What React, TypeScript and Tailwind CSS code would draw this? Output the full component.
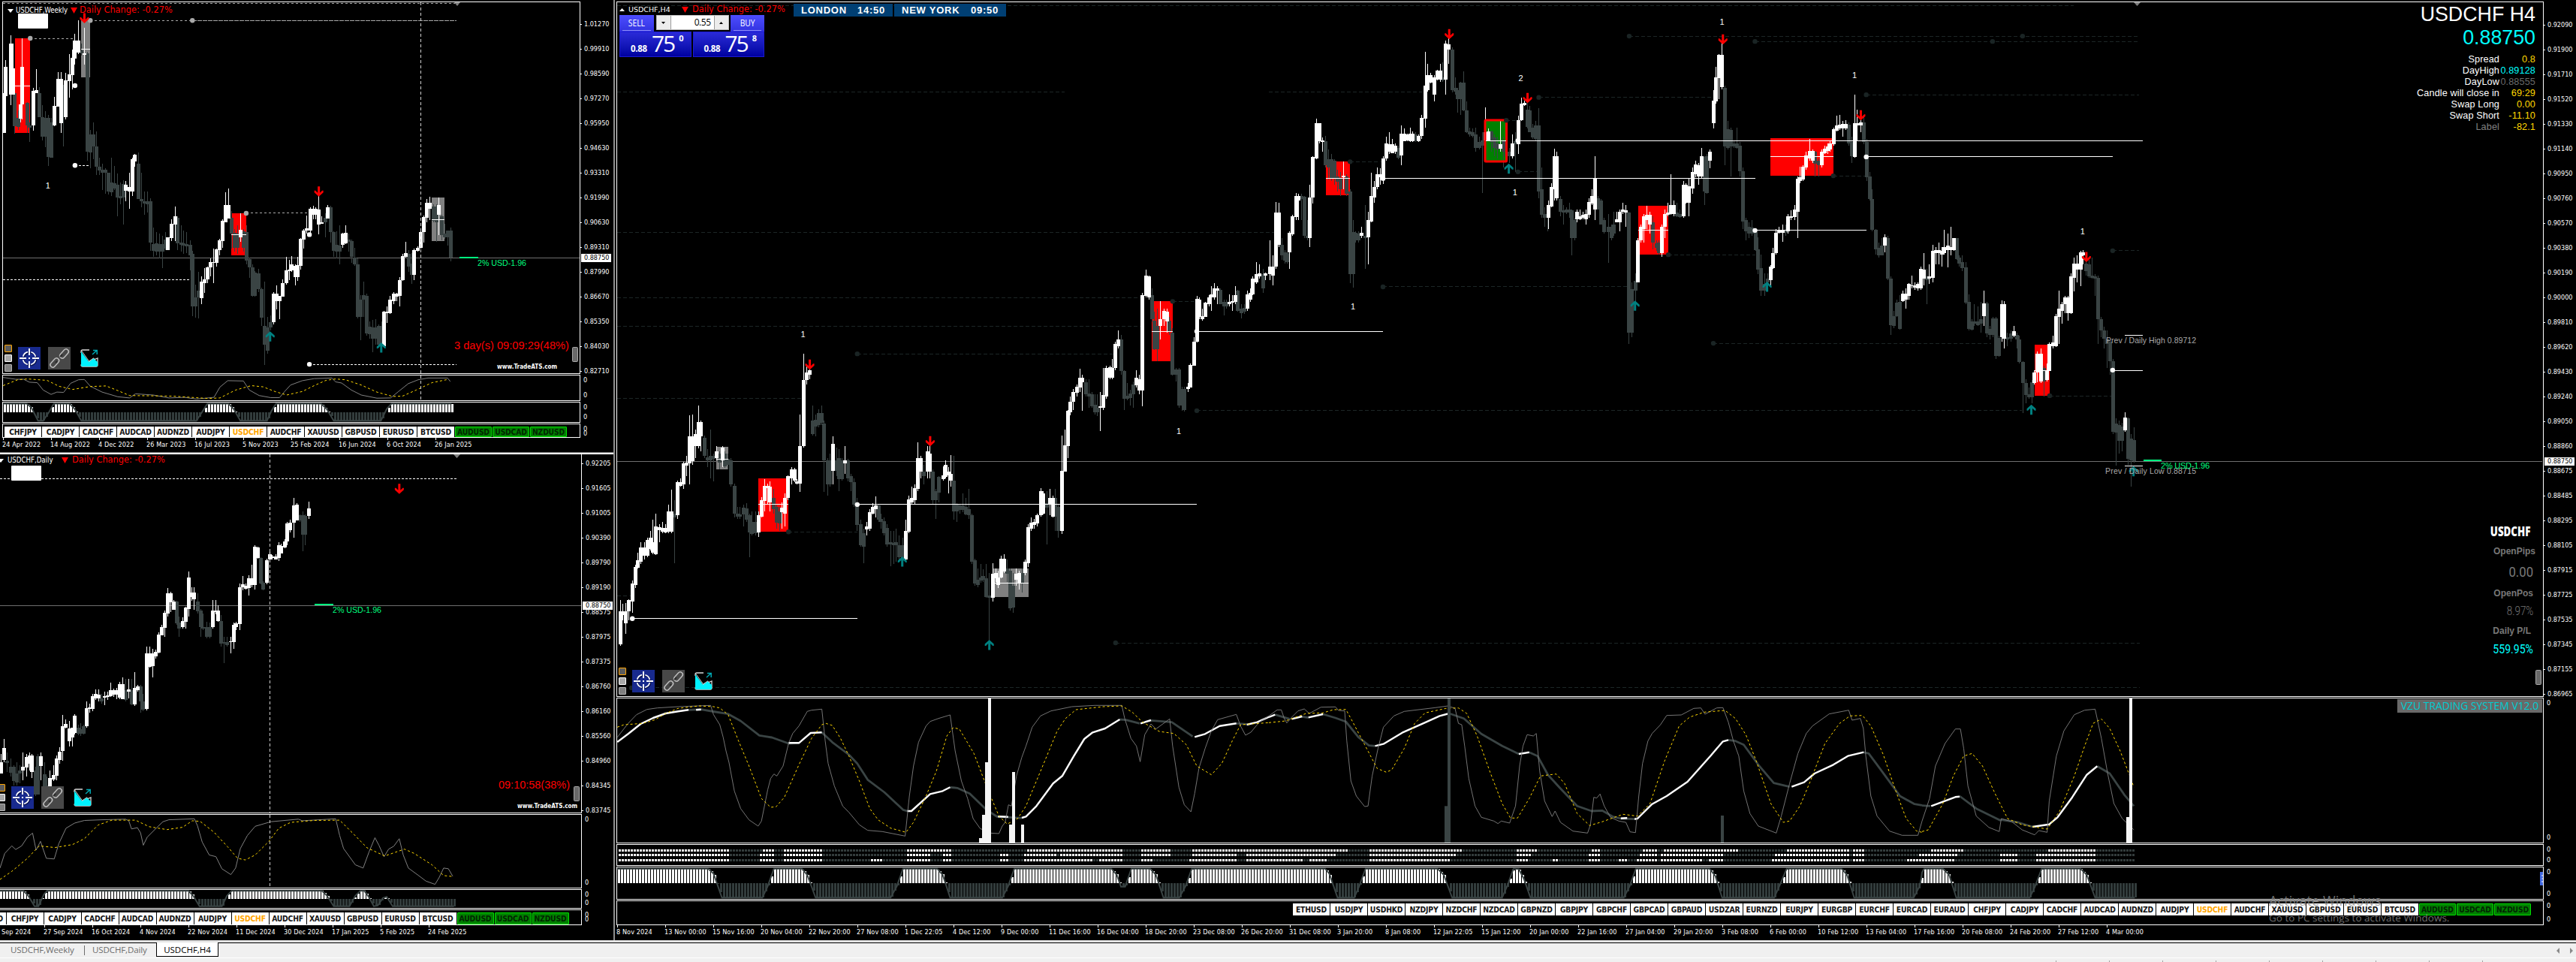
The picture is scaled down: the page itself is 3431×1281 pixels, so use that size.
import React from "react";

/* ---------- geometry helpers ---------- */

type Frame = { ox: number; oy: number; sx: number; sy: number };

const WEEKLY: Frame = { ox: 0, oy: 0, sx: 1.9122, sy: 2.5705 };
const DAILY: Frame = { ox: 0, oy: 600, sx: 1.9122, sy: 2.3025 };
const H4A: Frame = { ox: 820, oy: 0, sx: 1.8023, sy: 1.7043 };
const H4B: Frame = { ox: 1690, oy: 0, sx: 1.8023, sy: 1.7043 };
const H4C: Frame = { ox: 2560, oy: 0, sx: 1.8002, sy: 1.7043 };
const OSCA: Frame = { ox: 820, oy: 860, sx: 1.8023, sy: 3 };
const OSCB: Frame = { ox: 1690, oy: 860, sx: 1.8023, sy: 3 };
const OSCC: Frame = { ox: 2560, oy: 860, sx: 1.8002, sy: 3 };

const fx = (f: Frame, x: number) => f.ox + x / f.sx;
const fy = (f: Frame, y: number) => f.oy + y / f.sy;
const rows = (s: string) => s.trim().split(";").map((r) => r.trim()).filter(Boolean).map((r) => r.split(/[\s,]+/).map(Number));
const pts = (f: Frame, s: string): [number, number][] =>
  s.trim().split(/\s+/).map((p) => {
    const [x, y] = p.split(",").map(Number);
    return [fx(f, x), fy(f, y)];
  });
const str = (p: [number, number][]) => p.map(([x, y]) => x.toFixed(1) + "," + y.toFixed(1)).join(" ");

const SLATE = "#3a4444";

/* ---------- drawing primitives ---------- */

/* Each row: centre, body top, body bottom, wick top, wick bottom */
function Candles({ f, data, color }: { f: Frame; data: string; color: string }) {
  return (
    <g fill={color} shapeRendering="crispEdges">
      {rows(data).map(([x, t, b, wt, wb], i) => {
        const cx = Math.round(fx(f, x) - 0.5);
        const y = Math.round(fy(f, t));
        const h = Math.max(1, Math.round(fy(f, b)) - y);
        const w0 = Math.round(fy(f, wt));
        const w1 = Math.round(fy(f, wb));
        return (
          <React.Fragment key={i}>
            <rect x={cx - 2} y={y} width={5} height={h} />
            <rect x={cx} y={w0} width={1} height={Math.max(1, w1 - w0)} />
          </React.Fragment>
        );
      })}
    </g>
  );
}

function Boxes({ f, data, color }: { f: Frame; data: string; color: string }) {
  return (
    <g fill={color} shapeRendering="crispEdges">
      {rows(data).map(([x0, y0, x1, y1], i) => (
        <rect key={i} x={fx(f, x0)} y={fy(f, y0)} width={fx(f, x1) - fx(f, x0)} height={fy(f, y1) - fy(f, y0)} />
      ))}
    </g>
  );
}

/* Each row: x0, x1, y */
function HLines({ f, data, color, dash, w = 1 }: { f: Frame; data: string; color: string; dash?: string; w?: number }) {
  return (
    <g stroke={color} strokeWidth={w} strokeDasharray={dash} shapeRendering="crispEdges">
      {rows(data).map(([x0, x1, y], i) => {
        const yy = Math.floor(fy(f, y)) + 0.5;
        return <line key={i} x1={fx(f, x0)} x2={fx(f, x1)} y1={yy} y2={yy} />;
      })}
    </g>
  );
}

function Dots({ f, data, color }: { f: Frame; data: string; color: string }) {
  return (
    <g fill={color}>
      {rows(data).map(([x, y], i) => (
        <circle key={i} cx={fx(f, x)} cy={fy(f, y)} r={3.2} />
      ))}
    </g>
  );
}

function Arrows({ f, data, up }: { f: Frame; data: string; up?: boolean }) {
  return (
    <g fill={up ? "#008080" : "#ff0000"}>
      {rows(data).map(([x, y], i) => (
        <path
          key={i}
          transform={`translate(${fx(f, x)} ${fy(f, y)}) scale(1 ${up ? -1 : 1})`}
          d="M-1.5 -6.5H1.5V2L4.5 -1L6 -1V1.5L0 7L-6 1.5V-1L-4.5 -1L-1.5 2Z"
        />
      ))}
    </g>
  );
}

function Marks({ f, data }: { f: Frame; data: string }) {
  return (
    <g fill="#fff" fontFamily="Liberation Sans" fontSize="11" textAnchor="middle">
      {rows(data).map(([x, y, n], i) => (
        <text key={i} x={fx(f, x)} y={fy(f, y) + 4}>{n}</text>
      ))}
    </g>
  );
}

function Line({ f, d, color, w = 1, dash }: { f: Frame; d: string; color: string; w?: number; dash?: string }) {
  return <polyline points={str(pts(f, d))} fill="none" stroke={color} strokeWidth={w} strokeDasharray={dash} strokeLinejoin="round" />;
}

/* Two-sided histogram under an envelope curve */
function Histogram({ points, zero }: { points: [number, number][]; zero: number }) {
  const bars: React.ReactNode[] = [];
  const start = Math.ceil(points[0][0]);
  const end = points[points.length - 1][0];
  let k = 0;
  for (let x = start; x < end; x += 4) {
    while (k < points.length - 2 && points[k + 1][0] < x) k++;
    const [x0, y0] = points[k];
    const [x1, y1] = points[k + 1];
    const y = Math.round(y0 + ((y1 - y0) * (x - x0)) / (x1 - x0 || 1));
    if (y < zero) bars.push(<rect key={x} x={x} y={y} width={3} height={zero - y} fill="#fff" />);
    else if (y > zero) bars.push(<rect key={x} x={x} y={zero} width={3} height={y - zero} fill="#323c3c" />);
  }
  return (
    <g>
      <g shapeRendering="crispEdges">{bars}</g>
      <polyline points={str(points)} fill="none" stroke={SLATE} strokeWidth={2} />
    </g>
  );
}

function Plot({ x, y, w, h, children }: { x: number; y: number; w: number; h: number; children?: React.ReactNode }) {
  return (
    <svg className="block" width={w} height={h} viewBox={`${x} ${y} ${w} ${h}`}>
      {children}
    </svg>
  );
}

/* ---------- price series ---------- */

const weeklyUp = `10 320 455 315 455;15 230 328 205 350;27 148 325 120 360;34 235 325 148 325;57 230 358 132 408;53 358 405 235 420;85 310 430 300 448;93 308 320 236 320;138 362 430 332 432;148 270 365 247 365;155 270 422 247 455;168 275 402 250 408;177 255 277 185 335;184 198 258 170 305;191 140 200 115 220;199 140 180 70 185;215 183 188 95 220;321 632 652 620 690;329 640 655 590 715;337 545 655 540 670;344 530 552 527 570;428 812 855 812 855;437 765 815 750 825;446 740 768 708 825;513 965 1020 945 1040;521 955 968 917 1003;528 915 957 912 968;537 898 915 883 945;544 897 900 850 970;551 853 900 850 912;559 823 855 817 875;567 757 825 750 848;575 702 760 658 762;582 703 748 645 748;612 787 812 730 828;697 1006 1103 1000 1110;705 1006 1030 977 1058;712 1012 1030 1012 1092;720 968 1015 955 1015;729 925 970 878 975;737 922 928 890 960;743 905 925 877 930;752 910 948 905 977;759 908 948 878 962;766 818 910 815 922;774 790 820 785 850;782 782 790 738 800;790 715 790 710 805;798 715 735 705 750;805 715 735 710 750;812 718 768 672 802;820 760 765 740 765;834 710 748 702 748;872 800 838 797 848;880 798 833 770 835;978 1068 1185 1065 1190;986 1068 1073 1048 1105;994 1025 1073 1013 1075;1003 1005 1030 1000 1040;1010 1005 1015 1003 1030;1018 958 1012 948 1050;1026 877 960 870 962;1034 865 880 828 882;1055 857 940 850 958;1064 847 858 842 860;1071 793 848 790 850;1080 742 795 738 830;1088 695 745 682 760;1095 695 715 673 752;1118 703 735 677 805`;
const weeklyDown = `38 320 432 320 458;46 403 435 378 445;69 353 430 350 455;76 428 438 420 487;100 318 400 298 400;108 400 467 360 480;116 403 467 380 505;124 403 538 393 568;131 420 540 403 540;162 375 402 290 500;207 172 183 150 190;222 182 520 178 550;230 460 522 445 575;238 460 500 418 545;245 500 570 450 600;253 570 583 540 600;261 580 590 560 650;268 580 592 575 662;276 590 655 590 665;284 625 657 540 672;291 628 645 568 650;299 632 675 595 740;307 672 678 625 700;314 630 675 618 768;352 560 680 522 680;360 680 688 590 710;368 690 696 655 735;376 690 700 655 728;383 690 830 678 858;391 835 858 780 880;399 833 860 795 875;407 835 860 800 885;414 835 862 808 918;422 820 850 795 855;453 745 832 740 855;461 830 838 772 860;468 832 840 790 870;475 835 842 795 865;484 838 875 822 925;490 870 1048 858 1082;499 1018 1048 975 1088;506 995 1018 930 1090;590 745 800 722 850;598 798 848 785 862;606 800 848 770 870;620 792 848 785 860;628 795 893 772 905;635 887 915 882 950;643 915 1012 905 1015;650 933 1012 928 1015;658 935 990 920 1000;666 990 1087 985 1115;674 1115 1180 963 1248;681 1120 1200 1085 1210;689 1103 1120 1080 1130;828 745 760 730 812;842 710 795 705 830;850 795 858 792 878;857 837 862 792 885;865 840 862 770 905;888 820 828 800 860;896 825 880 820 900;903 882 905 848 910;911 905 1085 885 1090;918 1025 1085 1010 1165;926 1010 1025 965 1085;934 1012 1142 1005 1148;941 1118 1145 1100 1160;949 1120 1160 1095 1205;957 1120 1160 1092 1180;965 1115 1180 1110 1190;972 1115 1180 1100 1190;1041 870 912 855 930;1049 903 940 865 972;1104 707 757 700 760;1111 707 760 700 828;1126 740 805 735 822;1133 800 812 765 818;1141 790 812 788 840;1148 788 882 780 895`;

const dailyUp = `2 955 990 930 990;11 912 948 885 955;59 970 980 925 1010;67 940 972 930 1000;75 935 960 925 980;82 935 985 930 1005;105 937 968 925 1010;128 1005 1030 980 1032;136 995 1008 965 1012;145 945 997 935 1010;152 923 948 910 960;160 845 922 810 950;168 837 850 825 852;176 852 890 830 908;184 850 880 850 908;191 812 865 808 870;220 790 845 768 850;228 788 792 775 803;236 752 792 745 800;244 745 760 732 765;251 748 760 732 768;266 752 758 740 780;275 750 755 738 765;282 735 752 712 755;290 735 748 730 755;298 735 748 728 762;305 715 758 710 762;313 715 762 695 762;327 732 738 700 760;343 728 778 680 782;350 722 735 718 740;373 622 792 600 797;381 622 662 600 665;389 622 660 608 695;397 618 632 610 638;405 565 620 558 622;413 540 567 535 567;420 497 543 490 572;428 437 500 422 508;435 437 465 432 495;442 462 488 458 488;465 522 542 512 545;473 482 525 478 545;480 390 485 371 508;488 435 450 420 460;495 435 455 420 488;542 490 542 458 545;549 490 495 458 502;556 490 522 475 525;588 585 587 572 622;595 535 587 528 607;602 530 540 525 550;610 418 532 408 550;618 410 418 385 428;626 415 423 408 425;633 392 422 383 445;641 392 412 350 418;650 295 412 290 425;656 298 330 295 332;679 337 405 332 410;687 317 335 305 340;694 325 330 320 335;702 325 335 318 335;710 290 330 282 338;717 292 315 285 315;725 278 298 272 300;732 223 278 218 290;740 220 245 212 250;749 167 222 145 268;756 165 213 162 215;786 177 200 157 210`;
const dailyDown = `19 950 958 925 985;28 970 988 945 1000;36 970 1012 965 1028;43 990 1018 955 1028;50 980 990 965 1020;90 980 1055 970 1058;97 937 1055 930 1055;113 993 1030 955 1035;120 1028 1035 1000 1040;199 850 868 840 872;206 855 868 835 875;213 845 868 840 870;259 760 768 745 775;320 735 765 700 770;335 735 778 700 780;358 722 768 718 803;365 768 795 745 800;450 462 530 460 535;457 528 545 510 570;503 462 492 438 500;511 490 540 485 572;518 540 545 500 550;526 542 570 525 575;534 540 572 528 575;564 522 592 505 600;571 588 592 572 652;579 588 597 572 600;664 330 407 328 410;670 405 427 400 428;763 198 215 195 218;771 198 258 187 308;778 200 258 195 290`;

const h4aUp = `11 1388 1462 1362 1466;18 1387 1395 1370 1408;25 1388 1415 1368 1438;32 1362 1388 1360 1408;40 1325 1365 1318 1390;47 1287 1327 1282 1335;54 1272 1288 1255 1290;61 1242 1275 1230 1280;69 1242 1262 1230 1270;76 1225 1262 1220 1265;83 1220 1245 1205 1250;90 1230 1255 1180 1258;97 1195 1258 1165 1260;105 1197 1203 1190 1230;112 1198 1207 1185 1210;120 1198 1208 1190 1210;127 1160 1207 1145 1210;134 1160 1207 1112 1210;148 1095 1170 1090 1178;155 1095 1103 1085 1105;163 1052 1100 1048 1110;170 1050 1056 1035 1080;178 990 1052 942 1100;184 990 1047 940 1055;192 985 1012 975 1040;199 958 1013 920 1018;205 958 990 955 1025;242 1025 1040 1012 1045;256 1015 1045 1012 1060;343 1170 1208 1160 1218;350 1135 1172 1128 1175;357 1103 1137 1087 1160;365 1103 1107 1098 1145;371 1105 1140 1092 1160;400 1152 1162 1140 1200;407 1130 1165 1120 1195;414 1080 1130 1078 1135;422 1065 1085 1060 1100;429 1065 1090 1062 1095;436 1092 1098 1088 1100;443 1012 1098 940 1117;451 863 1012 803 1015;458 845 863 832 872;465 840 850 830 860;522 1008 1068 990 1100;551 1045 1052 1012 1075;603 1195 1202 1185 1215;610 1163 1200 1155 1205;617 1150 1165 1142 1168;624 1147 1155 1127 1175;696 1205 1270 1180 1272;704 1133 1207 1125 1210;711 1130 1140 1105 1145;718 1108 1135 1100 1145;726 1040 1110 1004 1115;733 1040 1070 1035 1085;748 1025 1070 1012 1085;755 1030 1070 1010 1085;786 1078 1088 1058 1090;793 1055 1083 1045 1085;800 1070 1078 1060 1120;805 1075 1090 1032 1105;905 1302 1357 1278 1365;912 1300 1312 1290 1320;918 1310 1328 1295 1335;926 1268 1310 1262 1312;933 1268 1297 1258 1300;962 1302 1315 1290 1330;969 1300 1325 1295 1338;983 1275 1300 1270 1305;991 1197 1278 1190 1287;998 1187 1200 1175 1205;1005 1185 1192 1178 1200;1012 1170 1188 1165 1195;1021 1115 1170 1108 1172;1027 1120 1165 1115 1168;1042 1130 1145 1110 1170;1049 1130 1172 1125 1175;1071 1068 1205 988 1212;1078 1010 1070 975 1070;1085 933 1012 930 1040;1092 912 935 900 942;1099 890 912 882 930;1107 877 892 872 900;1115 857 880 837 890;1121 857 868 850 932;1164 922 925 890 978;1171 897 925 835 930;1178 835 900 830 905;1186 833 857 830 860;1192 835 857 815 860;1200 780 835 775 840;1207 770 785 750 790;1249 858 875 840 880;1257 860 887 850 895;1265 670 887 665 922;1273 625 672 612 675;1280 628 675 625 680;1308 725 740 683 770;1316 705 725 700 740;1323 707 730 700 755;1374 878 882 870 890;1380 828 880 825 880;1388 775 830 765 830;1395 678 775 672 778;1402 680 720 675 725;1409 718 725 700 728;1416 687 720 685 720;1424 675 690 670 695;1431 668 675 650 705;1438 655 675 643 680;1445 655 660 650 690;1473 685 690 668 695;1480 683 687 670 705;1487 670 685 650 690;1516 668 700 660 705;1523 665 680 655 685;1530 633 668 628 670;1538 622 640 595 645;1545 620 628 600 632;1560 620 625 618 635`;
const h4aDown = `141 1165 1175 1135 1278;213 993 1035 988 1040;220 1038 1045 1020 1060;228 1035 1045 975 1085;235 1035 1042 1030 1093;249 1030 1050 1025 1065;263 1030 1058 1025 1062;270 1042 1055 1030 1065;277 1045 1100 1040 1105;285 1102 1165 1098 1175;292 1165 1172 1150 1178;299 1167 1172 1150 1178;307 1152 1168 1145 1195;314 1153 1180 1142 1185;321 1170 1208 1165 1265;328 1185 1212 1160 1215;336 1185 1210 1160 1215;379 1130 1155 1110 1165;386 1150 1187 1145 1200;393 1160 1188 1150 1205;473 955 985 920 988;480 953 968 940 990;487 937 965 928 970;494 937 960 920 965;501 962 1045 955 1117;509 1045 1100 1040 1125;515 1045 1100 1030 1105;530 1045 1068 1015 1080;537 1040 1087 1020 1115;544 1045 1088 1040 1090;558 1045 1085 1042 1092;565 1080 1095 1075 1115;572 1095 1145 1085 1150;580 1145 1192 1130 1205;588 1190 1238 1180 1240;596 1210 1240 1200 1278;631 1147 1180 1145 1185;638 1178 1185 1165 1200;645 1182 1210 1175 1215;652 1198 1235 1190 1240;660 1230 1235 1205 1285;667 1232 1237 1205 1280;674 1230 1238 1200 1275;681 1237 1265 1215 1272;689 1237 1270 1220 1275;740 1070 1080 1055 1100;762 1070 1135 1065 1145;769 1115 1135 1110 1178;776 1082 1118 1080 1140;812 1090 1160 1035 1180;819 1145 1160 1142 1185;826 1147 1158 1145 1165;833 1147 1158 1120 1162;841 1150 1168 1130 1170;848 1155 1170 1110 1178;855 1170 1275 1165 1280;862 1272 1325 1268 1330;869 1315 1328 1290 1332;876 1310 1318 1280 1322;883 1308 1315 1292 1320;890 1312 1355 1280 1356;897 1352 1356 1300 1455;940 1290 1302 1270 1320;947 1295 1380 1290 1385;954 1330 1378 1300 1390;976 1300 1325 1290 1345;1035 1142 1152 1115 1235;1056 1130 1172 1110 1205;1063 1150 1205 1145 1220;1129 868 895 860 900;1136 893 900 860 925;1143 895 922 890 925;1150 918 935 895 940;1157 925 935 895 945;1214 770 842 760 850;1221 842 905 840 930;1229 898 905 870 908;1236 893 903 885 920;1243 872 895 865 925;1287 670 725 655 730;1294 728 792 707 795;1301 740 792 700 820;1330 728 752 720 760;1337 755 850 745 852;1345 838 850 835 865;1352 838 920 835 925;1359 882 920 878 932;1366 882 930 878 934;1452 658 690 655 690;1460 685 695 680 715;1467 685 695 680 700;1494 660 705 658 708;1502 700 710 690 722;1509 698 708 690 712;1554 622 655 610 665`;

const h4bUp = `3 605 622 545 635;10 605 625 580 648;17 482 605 458 610;24 482 555 460 560;50 528 572 525 610;57 490 532 488 535;65 445 492 438 500;72 445 455 440 500;99 448 540 420 560;106 357 448 355 462;114 280 360 270 362;121 280 320 280 325;129 318 322 312 345;180 398 402 367 430;223 528 535 515 540;238 500 538 480 600;246 445 502 392 505;253 425 448 410 460;260 395 425 380 430;267 395 402 382 420;275 360 402 355 418;282 325 360 310 365;289 328 345 300 350;296 328 347 315 348;303 330 345 325 350;318 303 352 285 375;325 303 320 292 320;332 305 318 303 320;339 303 320 290 322;346 303 320 298 322;360 308 320 305 322;367 268 308 260 315;375 195 270 118 290;382 170 205 145 208;389 170 187 165 190;397 175 215 170 230;404 160 180 158 182;411 160 180 145 185;425 98 180 92 215;432 100 112 85 145;520 300 318 243 320;527 298 318 292 320;556 328 338 275 345;585 325 355 305 360;599 272 328 262 350;606 235 272 222 275;613 233 238 228 240;671 465 495 455 520;678 425 468 415 470;686 355 430 337 455;692 355 450 345 455;740 480 498 475 505;747 490 497 475 500;754 488 495 480 497;761 485 497 475 510;769 458 488 450 495;776 445 462 430 465;783 405 475 355 500;835 497 505 480 505;842 480 505 475 525;849 475 480 460 485;857 478 483 465 515;886 545 640 540 640;893 515 545 510 550;901 490 520 485 550;908 487 500 467 520;915 487 510 480 530;944 515 575 510 583;951 485 515 475 540;958 482 488 460 490;966 465 485 395 488;973 465 485 455 490;995 420 490 410 495;1002 420 460 415 462;1009 422 460 405 490;1017 390 428 380 440;1024 373 395 365 402;1031 375 400 370 420;1039 355 400 335 405;1059 345 365 340 382;1067 228 280 205 292;1074 175 230 152 235;1081 125 178 122 225;1088 125 198 95 202;1204 605 635 602 650;1211 575 608 562 610;1218 528 575 520 578;1225 522 528 515 530;1233 522 528 510 548;1247 490 525 485 530;1254 490 495 478 500;1262 475 492 465 500;1269 405 480 400 540;1276 402 410 378 415;1283 378 408 375 410;1290 353 380 345 385;1298 342 360 315 365;1305 342 365 340 370;1327 345 375 340 380;1334 338 348 330 350;1341 332 342 325 350;1348 325 340 320 345;1356 293 328 290 330;1363 285 297 262 298;1370 283 292 260 295;1377 282 292 275 310;1385 282 292 272 295;1406 280 357 215 358;1413 280 285 248 318;1421 278 285 270 300;1478 538 558 532 572;1522 667 683 660 685;1530 667 680 655 700;1537 645 672 642 680;1544 648 650 625 655;1551 648 652 640 658;1558 645 655 640 660;1565 610 655 605 658`;
const h4bDown = `31 555 580 540 590;39 572 592 568 598;45 575 595 572 598;79 445 452 440 500;86 447 535 445 540;93 535 540 500 545;136 320 375 308 380;144 362 380 340 408;151 362 405 350 410;158 365 405 362 420;165 400 412 385 435;172 405 430 390 445;187 400 440 395 445;195 435 622 430 643;202 527 622 500 653;209 528 545 525 550;216 530 545 525 550;231 535 540 465 610;310 335 358 330 362;353 305 318 300 322;418 175 182 142 185;440 112 205 108 210;447 200 208 175 215;454 205 225 200 255;461 187 225 185 260;468 187 250 162 252;475 250 300 230 302;482 298 305 290 310;490 300 308 292 312;497 305 335 290 345;505 322 335 310 340;513 318 330 300 438;535 298 322 296 345;542 312 335 305 355;549 325 340 310 360;563 318 345 310 380;570 345 355 330 365;577 345 355 335 370;592 320 328 300 390;620 248 288 230 292;627 250 300 240 300;634 290 312 282 315;641 285 315 275 318;648 285 435 245 450;656 430 487 380 495;663 485 495 470 515;670 490 495 465 525;700 452 480 445 490;707 478 482 465 510;714 475 482 470 485;721 475 482 460 495;728 478 540 475 580;735 500 540 495 545;791 450 475 445 475;798 455 510 452 510;805 500 527 495 530;815 515 527 485 597;822 515 540 510 545;829 510 530 480 535;865 482 755 480 780;872 657 755 640 765;880 637 660 620 700;922 505 550 490 565;930 552 562 545 570;937 550 575 545 578;980 482 490 460 492;987 485 492 475 495;1046 357 435 355 465;1052 355 438 350 440;1095 200 332 195 375;1103 293 335 275 340;1110 295 332 290 400;1117 325 332 318 335;1124 325 335 290 337;1131 330 388 322 400;1139 388 502 380 520;1146 500 525 495 545;1153 515 530 505 540;1160 517 530 500 535;1168 527 567 522 570;1175 565 612 538 622;1182 608 660 577 672;1190 645 660 620 672;1197 632 640 620 655;1240 522 528 510 535;1312 345 372 342 400;1320 365 375 360 400;1392 283 325 278 330;1399 322 355 310 370;1428 278 322 265 328;1435 322 402 315 410;1442 400 452 390 455;1449 452 522 430 525;1457 522 565 520 578;1464 562 580 550 585;1471 558 580 540 580;1486 540 632 535 635;1493 632 738 628 760;1500 718 740 705 745;1507 687 718 680 720;1514 685 747 670 748`;

const h4cUp = `4 612 632 575 648;18 628 632 600 645;26 570 630 555 640;33 568 575 560 600;40 568 575 550 600;47 570 577 560 605;54 560 575 522 578;62 558 568 530 607;69 560 568 515 580;76 540 568 540 570;148 688 718 660 740;191 690 765 682 775;198 690 768 683 790;220 752 762 740 765;270 845 870 840 872;277 802 845 798 868;285 802 865 790 870;299 840 862 825 865;306 780 842 778 842;314 778 785 762 790;321 717 785 712 788;328 700 720 660 780;336 690 705 685 735;343 675 690 672 710;350 675 710 672 728;357 628 710 620 712;365 598 630 585 662;372 598 612 580 640;380 573 612 570 650;387 573 580 568 600;487 948 977 935 980`;
const h4cDown = `11 628 635 610 690;83 540 588 540 590;90 585 598 580 605;97 595 608 580 615;105 607 687 595 690;112 685 747 668 750;119 730 748 725 750;126 730 735 690 740;134 730 738 695 740;141 725 735 685 755;155 688 757 685 765;163 747 760 740 770;170 722 760 720 765;177 722 808 720 815;184 767 808 762 810;205 765 770 755 785;213 757 768 750 775;227 760 770 755 790;234 770 822 762 825;242 822 870 820 937;249 870 897 860 915;256 895 902 880 905;263 868 902 862 915;292 835 865 830 900;394 598 615 590 625;401 600 628 590 630;408 625 630 585 632;415 628 632 622 672;422 630 725 625 780;429 725 750 720 765;436 750 768 742 790;444 768 780 750 835;451 775 820 770 850;458 820 980 815 985;465 962 982 950 1057;472 965 1000 955 1030;480 968 1000 960 1025;494 950 1042 948 1055;501 995 1045 985 1105;508 998 1047 970 1050`;

/* ---------- oscillator curves ---------- */

const fastLine: [Frame, string][] = [
  [OSCA, "4,365 30,310 50,275 75,254 100,248 150,243 228,238 235,275 250,315 258,365 265,420 272,465 285,580 300,650 320,695 342,720 350,700 365,575 372,530 380,512 387,520 402,480 415,390 425,350 440,320 460,262 470,257 495,253 503,380 510,470 525,560 545,640 560,665 585,715 605,737 640,742 695,760 705,600 715,480 727,385 745,320 755,302 775,290 803,276 815,420 830,540 845,610 858,690 875,730 900,748 920,750 928,720 935,705 943,635 950,640 962,520 975,445 985,400 1000,325 1020,280 1045,260 1095,243 1150,238 1215,238 1222,290 1237,370 1250,400 1259,463 1270,355 1285,312 1297,332 1330,292 1337,400 1352,565 1365,635 1381,663 1390,590 1400,490 1415,410 1430,340 1445,295 1490,274 1500,320 1512,357 1525,345 1545,305 1568,280"],
  [OSCB, "0,280 20,256 30,256 37,290 43,308 55,285 70,260 85,252 97,270 125,245 160,244 167,258 182,260 187,380 197,540 210,600 230,642 238,640 248,520 262,410 275,325 300,280 325,262 400,247 430,240 447,250 455,310 463,315 470,400 480,530 495,640 510,685 540,700 550,710 558,700 578,708 592,640 602,480 610,400 620,355 635,360 642,350 650,500 662,620 680,682 687,660 700,705 730,740 765,748 772,715 780,605 787,608 795,592 805,640 820,685 840,700 857,705 867,743 880,746 888,600 897,470 910,380 920,350 940,315 955,278 990,276 1020,250 1037,248 1047,273 1075,248 1090,247 1103,305 1115,380 1128,440 1140,580 1155,670 1175,720 1218,748 1230,680 1250,550 1270,430 1290,350 1305,320 1345,272 1392,257 1400,297 1420,290 1427,330 1433,440 1445,600 1460,680 1490,740 1520,757 1558,757 1568,700"],
  [OSCC, "0,700 18,610 32,480 55,390 80,332 92,332 100,410 110,560 130,680 160,725 185,742 190,690 215,702 240,735 270,755 280,738 300,745 305,620 322,440 340,340 365,275 390,257 415,253 430,370 445,510 460,630 480,690 508,735"],
];
const signalLine: [Frame, string][] = [
  [OSCA, "4,325 20,315 65,310 95,295 120,270 150,250 200,240 235,243 250,248 270,275 295,380 320,480 350,610 372,645 385,643 405,605 440,475 470,370 495,315 505,310 520,318 540,370 560,440 585,540 610,650 630,695 660,728 697,745 715,705 745,600 770,500 795,360 810,327 825,332 860,430 890,560 920,680 940,712 965,690 985,640 1010,540 1035,440 1060,340 1080,290 1105,255 1170,243 1215,240 1240,265 1265,305 1305,342 1340,350 1370,395 1395,480 1430,515 1455,470 1480,380 1500,315 1568,307"],
  [OSCB, "0,307 40,300 90,270 130,268 155,255 185,254 200,300 230,395 260,490 282,505 295,495 325,410 350,310 375,268 425,250 455,248 475,270 500,360 530,500 560,630 580,688 597,688 625,610 652,520 670,516 690,512 710,550 740,670 770,718 800,703 850,673 885,680 915,630 950,460 985,320 1010,285 1045,265 1095,258 1120,290 1145,355 1170,460 1205,630 1235,705 1250,700 1275,640 1300,540 1335,390 1370,310 1395,280 1425,278 1445,320 1475,435 1505,580 1530,690 1555,740 1568,745"],
  [OSCC, "0,742 15,735 50,630 75,520 100,440 120,430 145,480 175,590 205,690 240,715 300,732 330,660 365,520 390,400 410,310 430,292 450,330 475,420 497,515 508,565"],
];
const trendUp: [Frame, string][] = [
  [OSCA, "4,384 30,352 60,312 90,288 120,270 150,262 175,256"],
  [OSCA, "193,256 205,254"],
  [OSCA, "415,388 440,388 468,348 495,346"],
  [OSCA, "700,660 710,660 755,592 785,580 803,565"],
  [OSCA, "918,682 942,683"],
  [OSCA, "975,687 985,682 1010,640 1050,550 1072,520 1100,440 1125,372 1145,346 1175,330 1210,294"],
  [OSCA, "1260,310 1285,297"],
  [OSCA, "1390,364 1415,352 1450,320 1490,310"],
  [OSCA, "1515,315 1540,305 1568,284"],
  [OSCB, "0,285 15,275"],
  [OSCB, "55,292 80,282"],
  [OSCB, "95,286 130,273"],
  [OSCB, "255,400 275,392 320,347 370,310 410,280 433,270"],
  [OSCB, "600,432 625,425"],
  [OSCB, "845,689 860,688"],
  [OSCB, "878,692 885,690 920,632 955,600 1005,543 1060,440 1090,382 1103,376"],
  [OSCB, "1255,563 1285,545 1310,510 1355,475 1390,440 1428,425"],
  [OSCC, "22,640 80,604 90,602"],
  [OSCC, "265,723 305,713 325,685 360,605 395,515 420,481"],
];
const trendDown: [Frame, string][] = [
  [OSCA, "175,256 205,254 240,264 270,272 300,300 345,358 375,366 415,390 440,388"],
  [OSCA, "495,346 520,385 560,435 580,470 605,535 645,585 690,655 700,660"],
  [OSCA, "803,565 820,568 850,590 890,655 915,682 975,688"],
  [OSCA, "1210,294 1225,296 1258,310"],
  [OSCA, "1285,298 1335,305 1385,362"],
  [OSCA, "1490,310 1515,313"],
  [OSCB, "15,275 50,292"],
  [OSCB, "80,283 95,287"],
  [OSCB, "130,273 160,288 185,303 215,365 240,398 255,400"],
  [OSCB, "433,270 468,290 510,352 560,400 600,432"],
  [OSCB, "625,425 645,440 670,515 700,570 740,640 775,660 800,658 825,682 845,690 880,692"],
  [OSCB, "1103,376 1120,380 1140,395 1175,475 1212,548 1250,563"],
  [OSCB, "1428,425 1440,430 1480,520 1515,600 1550,632 1568,637"],
  [OSCC, "0,638 20,640"],
  [OSCC, "90,600 130,650 187,697 190,695 230,705 265,723"],
  [OSCC, "420,481 450,510 485,595 508,640"],
];
/* Volume spikes: x, top */
const spikesUp: [Frame, string][] = [
  [OSCA, "897 208;890 465;883 675;876 768;948 714;955 504;976 714"],
  [OSCC, "501 208;494 684"],
];
const spikesDown: [Frame, string][] = [[OSCB, "433 208;426 640;1089 678"]];

const stripRows: { y: number; ranges: [Frame, string][] }[] = [
  {
    y: 1131,
    ranges: [
      [OSCA, "7 273;353 380;404 496;699 806;988 1217;1262 1332;1384 1568"],
      [OSCB, "0 190;241 464;595 644;775 796;898 933;948 1127;1244 1394;1402 1430"],
      [OSCC, "22 100;302 416"],
    ],
  },
  {
    y: 1137,
    ranges: [
      [OSCA, "7 273;346 380;404 496;699 756;786 806;922 943;980 1059;1067 1217;1262 1332;1384 1490;1514 1568"],
      [OSCB, "0 160;241 450;595 630;767 796;890 933;941 1090;1215 1394;1402 1430;1560 1568"],
      [OSCC, "0 86;187 230;274 416"],
    ],
  },
  {
    y: 1144,
    ranges: [
      [OSCA, "7 273;346 380;404 496;613 640;699 756;786 806;922 943;980 1145;1160 1217;1262 1290;1377 1490;1514 1568"],
      [OSCB, "0 82;97 140;241 436;595 623;681 694;767 796;840 860;883 933;941 1041;1055 1090;1208 1394;1402 1430;1532 1568"],
      [OSCC, "0 78;187 230;274 416"],
    ],
  },
];

function Strip({ y, ranges }: { y: number; ranges: [Frame, string][] }) {
  const on = ranges.flatMap(([f, s]) => rows(s).map(([a, b]) => [fx(f, a) - 1, fx(f, b) - 1]));
  const cells: React.ReactNode[] = [];
  for (let x = 824; x < 2843; x += 4) {
    const lit = on.some(([a, b]) => x >= a && x < b);
    cells.push(<rect key={x} x={x} y={y} width={3} height={3} fill={lit ? "#ffffff" : "#333c3c"} />);
  }
  return <g shapeRendering="crispEdges">{cells}</g>;
}

const h4Envelope: [number, number][] = [
  ...pts(OSCA, "4,890 222,890 235,910 255,1006 352,1006 365,960 380,890 447,890 460,915 480,1006 660,1006 675,960 690,890 772,890 785,915 803,1006 928,1006 942,960 957,890 1190,890 1203,915 1213,962 1223,962 1238,890 1283,890 1297,915 1315,1006 1353,1006 1368,960 1383,890 1565,890"),
  ...pts(OSCB, "0,890 135,890 145,910 165,1006 205,1006 217,960 232,890 405,890 420,915 440,1006 560,1006 572,960 587,890 600,892 612,930 628,1006 852,1006 866,960 881,890 1058,890 1072,920 1088,1006 1213,1006 1228,950 1243,890 1375,890 1388,915 1405,1006 1548,1006 1562,960 1566,930"),
  ...pts(OSCC, "0,905 5,890 50,890 65,915 82,1006 258,1006 270,965 287,890 380,890 395,915 415,1006 510,1006"),
];
const weeklyEnvelope = pts(WEEKLY, "8,1382 68,1382 80,1395 97,1440 110,1440 125,1410 137,1382 178,1382 190,1400 207,1440 500,1440 515,1410 528,1382 582,1382 595,1400 612,1440 680,1440 692,1405 703,1382 818,1382 832,1400 850,1440 970,1440 985,1400 997,1382 1150,1382");
const dailyEnvelope = pts(DAILY, "0,1350 60,1350 72,1365 88,1397 98,1397 112,1360 120,1350 480,1350 492,1365 508,1397 565,1397 578,1365 590,1350 820,1350 833,1365 850,1397 890,1397 905,1365 918,1350 928,1350 940,1370 952,1397 962,1395 975,1372 985,1368 1000,1397 1156,1397");

/* ---------- labels ---------- */

const weeklyPrices = "1.01270 0.99910 0.98590 0.97270 0.95950 0.94630 0.93310 0.91990 0.90630 0.89310 0.87990 0.86670 0.85350 0.84030 0.82710".split(" ");
const dailyPrices = "0.92205 0.91605 0.91005 0.90390 0.89790 0.89190 0.88575 0.87975 0.87375 0.86760 0.86160 0.85560 0.84960 0.84345 0.83745".split(" ");
const h4Prices = "0.92090 0.91900 0.91710 0.91520 0.91330 0.91140 0.90950 0.90760 0.90570 0.90380 0.90190 0.90000 0.89810 0.89620 0.89430 0.89240 0.89050 0.88860 0.88675 0.88485 0.88295 0.88105 0.87915 0.87725 0.87535 0.87345 0.87155 0.86965".split(" ");

const weeklyDates = ["24 Apr 2022", "14 Aug 2022", "4 Dec 2022", "26 Mar 2023", "16 Jul 2023", "5 Nov 2023", "25 Feb 2024", "16 Jun 2024", "6 Oct 2024", "26 Jan 2025"];
const dailyDates = ["8 Sep 2024", "27 Sep 2024", "16 Oct 2024", "4 Nov 2024", "22 Nov 2024", "11 Dec 2024", "30 Dec 2024", "17 Jan 2025", "5 Feb 2025", "24 Feb 2025"];
const h4Dates = ["8 Nov 2024", "13 Nov 00:00", "15 Nov 16:00", "20 Nov 04:00", "22 Nov 20:00", "27 Nov 08:00", "1 Dec 22:05", "4 Dec 12:00", "9 Dec 00:00", "11 Dec 16:00", "16 Dec 04:00", "18 Dec 20:00", "23 Dec 08:00", "26 Dec 20:00", "31 Dec 08:00", "3 Jan 20:00", "8 Jan 08:00", "12 Jan 22:05", "15 Jan 12:00", "20 Jan 00:00", "22 Jan 16:00", "27 Jan 04:00", "29 Jan 20:00", "3 Feb 08:00", "6 Feb 00:00", "10 Feb 12:00", "13 Feb 04:00", "17 Feb 16:00", "20 Feb 08:00", "24 Feb 20:00", "27 Feb 12:00", "4 Mar 00:00"];

const sideSymbols = "CHFJPY CADJPY CADCHF AUDCAD AUDNZD AUDJPY USDCHF AUDCHF XAUUSD GBPUSD EURUSD BTCUSD AUDUSD USDCAD NZDUSD".split(" ");
const h4Symbols = ("ETHUSD USDJPY USDHKD NZDJPY NZDCHF NZDCAD GBPNZD GBPJPY GBPCHF GBPCAD GBPAUD USDZAR EURNZD EURJPY EURGBP EURCHF EURCAD EURAUD " + sideSymbols.join(" ")).split(" ");
const greenSymbols = new Set(["AUDUSD", "USDCAD", "NZDUSD"]);

/* ---------- small components ---------- */

const AXIS_TEXT = "font-['DejaVu_Sans_Condensed','Open_Sans',sans-serif] text-[9px] text-white";

function PriceAxis({ prices, pad, mark, markTop }: { prices: string[]; pad: string; mark: string; markTop: string }) {
  return (
    <div className={`relative flex-1 ${pad} ${AXIS_TEXT}`}>
      {prices.map((p) => (
        <div key={p} className="flex h-[33.01px] items-center gap-[3px] whitespace-nowrap leading-none">
          <span className="h-px w-[2px] bg-white" />
          {p}
        </div>
      ))}
      <div className={`absolute left-px ${markTop} flex h-[11px] w-[40px] items-center bg-white pl-1 leading-none text-black`}>{mark}</div>
    </div>
  );
}

function ZeroAxis() {
  return (
    <div className={`flex flex-1 flex-col justify-between pl-[4px] py-[5px] leading-none ${AXIS_TEXT}`}>
      <span className="-mt-px h-[6px] leading-[6px]">0</span>
      <span className="h-[6px] leading-[6px]">0</span>
    </div>
  );
}

function DateAxis({ dates, className }: { dates: string[]; className: string }) {
  return (
    <div className={`flex ${AXIS_TEXT} ${className}`}>
      {dates.map((d) => (
        <div key={d} className="w-16 shrink-0 whitespace-nowrap">
          <div className="h-[3px] border-l border-white" />
          <div className="-ml-px leading-[12px] tracking-[0.1px]">{d}</div>
        </div>
      ))}
    </div>
  );
}

function Chips({ symbols, h }: { symbols: string[]; h: string }) {
  return (
    <div className="flex">
      {symbols.map((s) => (
        <div
          key={s}
          className={
            "mr-px flex w-[49px] shrink-0 items-center justify-center font-['DejaVu_Sans_Condensed','Open_Sans',sans-serif] text-[10.3px] font-bold leading-none tracking-[-0.2px] " +
            h +
            " " +
            (greenSymbols.has(s)
              ? "rounded-[1px] border border-[#00e000] bg-[#008000] text-[#022602]"
              : s === "USDCHF"
                ? "bg-white text-[#ffa500]"
                : "bg-white text-[#151515]")
          }
        >
          {s}
        </div>
      ))}
    </div>
  );
}

function ToolIcons() {
  return (
    <div className="flex items-start">
      <div className="flex w-[10px] flex-col gap-[3px]">
        <span className="h-[10px] rounded-[1px] border border-[#ffa500] bg-[#5c5c5c]" />
        <span className="h-[10px] rounded-[1px] border border-white bg-[#a9a9a9]" />
        <span className="h-[10px] rounded-[1px] border border-[#b4b4b4] bg-[#808080]" />
      </div>
      <svg className="ml-2 mt-[3px]" width="30" height="30" viewBox="0 0 30 30">
        <rect width="30" height="30" fill="#182a8e" />
        <circle cx="16" cy="16" r="8.6" fill="none" stroke="#0a1450" strokeWidth="2" />
        <circle cx="15" cy="15" r="8.6" fill="none" stroke="#fff" strokeWidth="1.7" strokeDasharray="9 4.5" strokeDashoffset="-2.2" />
        <path d="M15 2v9M15 19v9M2 15h9M19 15h9" stroke="#fff" strokeWidth="1.9" />
        <rect x="14" y="14" width="2" height="2" fill="#fff" />
      </svg>
      <svg className="ml-[10px] mt-[3px]" width="30" height="30" viewBox="0 0 30 30">
        <rect width="30" height="30" fill="#484848" />
        <g fill="none" stroke="#bdbdbd" strokeWidth="1.5">
          <rect x="-3.3" y="-7" width="6.6" height="14" rx="3.3" transform="translate(21.5 9) rotate(42)" />
          <rect x="-3.3" y="-7" width="6.6" height="14" rx="3.3" transform="translate(8.8 21) rotate(42)" />
        </g>
        <path d="M12 19l-2 2M16 13l3-3" stroke="#2c2c2c" strokeWidth="2" />
      </svg>
      <svg className="ml-[13px] mt-[6px]" width="24" height="24" viewBox="0 0 24 24">
        <path d="M1 5V3Q1 1 3 1H12M23 12V21Q23 23 21 23H3Q1 23 1 21Z" fill="none" stroke="#d8d8d8" strokeWidth="1.3" />
        <path d="M1 3L11.5 17L17.5 12L23 17V22Q23 23 22 23H2Q1 23 1 22Z" fill="#00f2ff" />
        <path d="M1.5 2L11.5 16L17.5 12L20 14" fill="none" stroke="#d8d8d8" strokeWidth="1" />
        <path d="M16 7L22 1.5M17 1.5H22.2V7" fill="none" stroke="#00a9b4" strokeWidth="1.5" />
      </svg>
    </div>
  );
}

function DailyChange() {
  return (
    <>
      <svg width="9" height="8" viewBox="0 0 9 8"><path d="M0 0H9L4.5 8Z" fill="#f00" /></svg>
      <span className="font-['DejaVu_Sans',sans-serif] text-[11.4px] leading-none text-[#ff0000]">Daily Change: -0.27%</span>
    </>
  );
}

const ARIAL = "Liberation Sans, Arial, sans-serif";

/* ---------- chart windows ---------- */

function WeeklyWindow() {
  return (
    <section className="h-[602px] bg-black pl-[3px] pt-[2px]">
      <div className="flex h-[496px]">
        <div className="relative h-[496px] w-[770px] border border-white">
          <Plot x={4} y={3} w={768} h={494}>
            <Boxes f={WEEKLY} data="38 131 76 455;589 730 627 874" color="#ff0000" />
            <Boxes f={WEEKLY} data="207 68 229 265;1100 676 1132 824" color="#808080" />
            <HLines f={WEEKLY} data="8 1163 11;230 490 70;77 185 132;627 785 730" color="#a9a9a9" dash="3 3" />
            <HLines f={WEEKLY} data="490 1163 70" color="#a9a9a9" dash="6 1" />
            <HLines f={WEEKLY} data="8 484 957;191 230 566;788 1163 1247" color="#fff" dash="3 2" />
            <HLines f={WEEKLY} data="8 1477 883" color="#6e6e6e" />
            <Candles f={WEEKLY} data={weeklyDown} color={SLATE} />
            <Candles f={WEEKLY} data={weeklyUp} color="#fff" />
            <HLines f={WEEKLY} data="38 76 294;207 229 168;589 627 803;1100 1132 751" color="#fff" />
            <Dots f={WEEKLY} data="77 131;230 70;490 70;627 730" color="#a9a9a9" />
            <Dots f={WEEKLY} data="191 293;191 566;788 803;788 1247" color="#fff" />
            <line x1="560.5" x2="560.5" y1="3" y2="497" stroke="#d0d0d0" strokeDasharray="4 3" />
            <Arrows f={WEEKLY} data="215 62;812 655" />
            <Arrows f={WEEKLY} data="688 1152;971 1190" up />
            <Marks f={WEEKLY} data="122 635 1" />
            <path d="M605 3H613L609 8Z" fill="#808080" />
            <rect x="612" y="342" width="25" height="2" fill="#00ff7f" />
            <text x="636" y="354" fill="#00ff7f" fontFamily={ARIAL} fontSize="11" textLength="65" lengthAdjust="spacingAndGlyphs">2% USD-1.96</text>
            <text x="605" y="464.5" fill="#f00" fontFamily={ARIAL} fontSize="15.5" textLength="153" lengthAdjust="spacingAndGlyphs">3 day(s) 09:09:29(48%)</text>
            <text x="662" y="491" fill="#fff" fontFamily="DejaVu Sans" fontWeight="700" fontSize="8" textLength="80" lengthAdjust="spacingAndGlyphs">www.TradeATS.com</text>
            <rect x="762.5" y="462.5" width="7" height="19" rx="1" fill="#696969" stroke="#a9a9a9" />
          </Plot>
          <div className="absolute left-[6px] top-[3px] flex h-4 items-center gap-[3px] whitespace-nowrap text-white">
            <svg width="8" height="5" viewBox="0 0 8 5"><path d="M0 0H8L4 5Z" fill="#fff" /></svg>
            <span className="w-[70px] font-['DejaVu_Sans_Condensed'] text-[9.6px] leading-[12px] tracking-[-0.05px]">USDCHF,Weekly</span>
            <DailyChange />
          </div>
          <div className="absolute left-[20px] top-[15px] h-5 w-10 rounded-[1px] bg-white" />
          <div className="absolute left-[2px] top-[456px]"><ToolIcons /></div>
        </div>
        <PriceAxis prices={weeklyPrices} pad="pt-[14px]" mark="0.88750" markTop="top-[336px]" />
      </div>
      <div className="mt-px flex h-[35px]">
        <div className="w-[770px] border border-white">
          <Plot x={4} y={500} w={768} h={33}>
            <Line f={WEEKLY} color="#808080" d="8,1292 40,1298 60,1298 75,1308 95,1310 110,1335 130,1350 145,1342 162,1343 180,1312 200,1300 215,1299 230,1322 260,1342 300,1358 330,1362 345,1348 390,1352 430,1362 470,1360 500,1366 545,1360 560,1325 580,1303 620,1304 635,1335 660,1354 690,1361 712,1361 725,1340 740,1318 770,1303 800,1296 845,1294 855,1307 870,1311 895,1335 920,1352 960,1363 995,1362 1015,1340 1040,1313 1065,1300 1090,1294 1140,1294 1147,1306" />
            <Line f={WEEKLY} color="#ffd700" dash="3 3" d="8,1320 45,1300 70,1297 120,1302 150,1322 185,1333 230,1323 270,1321 300,1337 330,1354 440,1356 530,1364 560,1362 600,1335 640,1320 670,1324 700,1340 730,1352 770,1340 800,1320 830,1302 855,1297 880,1300 920,1318 960,1342 1000,1357 1025,1356 1060,1335 1100,1310 1140,1299" />
            <line x1="560.5" x2="560.5" y1="500" y2="533" stroke="#d0d0d0" strokeDasharray="4 3" />
          </Plot>
        </div>
        <ZeroAxis />
      </div>
      <div className="mt-px flex h-[28px]">
        <div className="w-[770px] border border-white">
          <Plot x={4} y={536} w={768} h={26}>
            <Histogram points={weeklyEnvelope} zero={549} />
          </Plot>
        </div>
        <ZeroAxis />
      </div>
      <div className="mt-px flex h-[19px]">
        <div className="w-[770px] border border-white pl-[2px] pt-[3px]"><Chips symbols={sideSymbols} h="h-[14px]" /></div>
        <ZeroAxis />
      </div>
      <DateAxis dates={weeklyDates} className="pl-px" />
    </section>
  );
}

function DailyWindow() {
  return (
    <section className="h-[647px] overflow-hidden bg-black">
      <div className="flex h-[478px]">
        <div className="relative h-[478px] w-[775px] border-b border-r border-white">
          <Plot x={0} y={605} w={774} h={477}>
            <HLines f={DAILY} data="0 1481 475" color="#6e6e6e" />
            <Candles f={DAILY} data={dailyDown} color={SLATE} />
            <Candles f={DAILY} data={dailyUp} color="#fff" />
            <HLines f={DAILY} data="0 1165 86" color="#fff" dash="3 2" />
            <line x1="359.5" x2="359.5" y1="605" y2="1082" stroke="#d0d0d0" strokeDasharray="4 3" />
            <Arrows f={DAILY} data="1017 117" />
            <path d="M604 605H613L608.5 610Z" fill="#808080" />
            <rect x="419" y="804" width="25" height="2" fill="#00ff7f" />
            <text x="443" y="816" fill="#00ff7f" fontFamily={ARIAL} fontSize="11" textLength="65" lengthAdjust="spacingAndGlyphs">2% USD-1.96</text>
            <text x="664" y="1049.5" fill="#f00" fontFamily={ARIAL} fontSize="15.5" textLength="95" lengthAdjust="spacingAndGlyphs">09:10:58(38%)</text>
            <text x="689" y="1075.5" fill="#fff" fontFamily="DejaVu Sans" fontWeight="700" fontSize="8" textLength="80" lengthAdjust="spacingAndGlyphs">www.TradeATS.com</text>
            <rect x="764.5" y="1047.5" width="7" height="19" rx="1" fill="#696969" stroke="#a9a9a9" />
          </Plot>
          <div className="absolute left-[-3px] top-0 flex h-4 items-center gap-[5px] whitespace-nowrap text-white">
            <svg width="8" height="5" viewBox="0 0 8 5"><path d="M0 0H8L4 5Z" fill="#fff" /></svg>
            <span className="w-[67px] font-['DejaVu_Sans_Condensed'] text-[9.6px] leading-[12px]">USDCHF,Daily</span>
            <DailyChange />
          </div>
          <div className="absolute left-[15px] top-[15px] h-5 w-10 rounded-[1px] bg-white" />
          <div className="absolute left-[-3px] top-[439px]"><ToolIcons /></div>
        </div>
        <PriceAxis prices={dailyPrices} pad="-mt-[4px]" mark="0.88750" markTop="top-[200px]" />
      </div>
      <div className="mt-px flex h-[99px]">
        <div className="w-[775px] border border-l-0 border-white">
          <Plot x={0} y={1085} w={774} h={97}>
            <Line f={DAILY} color="#808080" d="0,1280 12,1235 30,1212 40,1223 55,1212 70,1185 83,1173 92,1225 103,1198 118,1250 138,1252 150,1205 168,1158 190,1142 215,1134 260,1132 320,1130 328,1135 335,1160 350,1156 358,1172 365,1210 375,1185 400,1155 415,1138 430,1132 495,1129 503,1150 515,1200 533,1240 550,1245 565,1282 588,1300 600,1280 612,1220 630,1180 650,1152 690,1138 760,1130 770,1135 855,1129 865,1180 875,1220 905,1270 925,1280 940,1230 955,1187 965,1210 978,1245 990,1222 1003,1213 1017,1190 1027,1240 1040,1280 1065,1302 1085,1320 1108,1330 1118,1310 1130,1280 1142,1282 1153,1305" />
            <Line f={DAILY} color="#ffd700" dash="3 3" d="0,1315 30,1290 70,1250 100,1212 140,1217 185,1208 215,1190 250,1148 285,1133 345,1133 380,1153 425,1162 465,1155 490,1135 510,1137 545,1170 580,1215 605,1250 625,1255 650,1240 685,1198 710,1158 740,1140 800,1134 865,1133 900,1175 935,1218 980,1243 1030,1222 1055,1235 1100,1270 1130,1303 1153,1306" />
            <line x1="359.5" x2="359.5" y1="1085" y2="1182" stroke="#d0d0d0" strokeDasharray="4 3" />
          </Plot>
        </div>
        <ZeroAxis />
      </div>
      <div className="mt-px flex h-[26px]">
        <div className="w-[775px] border border-l-0 border-white">
          <Plot x={0} y={1185} w={774} h={24}>
            <Histogram points={dailyEnvelope} zero={1197} />
          </Plot>
        </div>
        <ZeroAxis />
      </div>
      <div className="mt-px flex h-[21px]">
        <div className="w-[775px] overflow-hidden border border-l-0 border-white pt-[3px]">
          <div className="-ml-[41.5px]"><Chips symbols={["EURAUD", ...sideSymbols]} h="h-4" /></div>
        </div>
        <ZeroAxis />
      </div>
      <DateAxis dates={dailyDates} className="-ml-[5px]" />
    </section>
  );
}

const infoRows: [string, string, string, string][] = [
  ["Spread", "0.8", "text-white", "text-[#ffd700]"],
  ["DayHigh", "0.89128", "text-white", "text-[#00ffff]"],
  ["DayLow", "0.88555", "text-white", "text-[#696969]"],
  ["Candle will close in", "69:29", "text-white", "text-[#ffd700]"],
  ["Swap Long", "0.00", "text-white", "text-[#ffd700]"],
  ["Swap Short", "-11.10", "text-white", "text-[#ffd700]"],
  ["Label", "-82.1", "text-[#808080]", "text-[#ffd700]"],
];

function TradeTicket() {
  return (
    <div className="relative w-[193px] font-['Open_Sans',sans-serif] text-white">
      <div className="flex h-[22px] justify-between">
        <div className="w-[46px] bg-gradient-to-b from-[#4d4dff] to-[#3232e0] pt-[2px] text-center text-[12px] leading-[17px]"><span className="mx-1 block h-[19px] border-b border-[#8a8af8]"><span className="inline-block scale-x-[0.86]">SELL</span></span></div>
        <div className="flex h-5 w-[97px] border border-[#bdbdbd] bg-white text-black">
          <div className="flex w-[19px] items-center justify-center border-r border-[#9c9c9c] bg-[#ececec]"><svg width="5" height="3" viewBox="0 0 5 3"><path d="M0 0H5L2.5 3Z" /></svg></div>
          <div className="flex-1 pr-1 text-right text-[12px] leading-[17px] tracking-[-0.5px]">0.55</div>
          <div className="flex w-[19px] items-center justify-center border-l border-[#9c9c9c] bg-[#ececec]"><svg width="5" height="3" viewBox="0 0 5 3"><path d="M0 3H5L2.5 0Z" /></svg></div>
        </div>
        <div className="w-[45px] bg-gradient-to-b from-[#4d4dff] to-[#3232e0] pt-[2px] text-center text-[12px] leading-[17px]"><span className="mx-1 block h-[19px] border-b border-[#8a8af8]"><span className="inline-block scale-x-[0.86]">BUY</span></span></div>
      </div>
      <div className="flex gap-[2px]">
        {["0", "8"].map((d) => (
          <div key={d} className="flex h-[34px] flex-1 items-start justify-end border border-[#1b1bd0] bg-gradient-to-b from-[#2a2ad8] to-[#0000a0] pr-[9px]">
            <span className="mt-[14px] text-[11.5px] font-bold leading-[16px] tracking-[-0.3px]">0.88</span>
            <span className="ml-[6px] text-[30px] leading-[30px] tracking-[-2px]">75</span>
            <span className="ml-[6px] mt-[2px] text-[11px] font-bold leading-[12px]">{d}</span>
          </div>
        ))}
      </div>
    </div>
  );
}

function H4Window() {
  return (
    <section className="relative w-[2612px] bg-black pl-[2px] pt-[2px]">
      <div className="flex h-[926px]">
        <div className="relative h-[926px] w-[2567px] border border-white">
          <Plot x={822} y={3} w={2565} h={924}>
            <Boxes f={H4A} data="342 1086 415 1207;1287 683 1337 820" color="#ff0000" />
            <Boxes f={H4B} data="137 366 195 443;887 467 959 578;1204 314 1355 399" color="#ff0000" />
            <Boxes f={H4C} data="270 782 306 898" color="#ff0000" />
            <Boxes f={H4A} data="905 1290 991 1355;242 1014 270 1066" color="#808080" />
            <Boxes f={H4B} data="520 273 570 366" color="#008000" />
            <HLines f={H4A} dash="5 3" color="#1c2626" data="4 3500 13;4 1078 209;4 1593 527;4 1265 676;4 1265 741;580 1200 803;4 450 904;415 580 1207;1337 1395 684;1395 3375 932;4 40 1352;1200 3658 1459;38 3658 1561" />
            <HLines f={H4B} dash="5 3" color="#1c2626" data="0 375 209;865 2088 82;1167 2088 94;648 1065 221;570 600 273;195 275 367;598 650 390;274 865 651;959 1168 578;1067 1733 779;1355 1435 400;1434 2088 215" />
            <HLines f={H4C} dash="5 3" color="#1c2626" data="457 520 569;306 457 899" />
            <HLines f={H4A} data="4 4625 1047" color="#6e6e6e" />
            <Candles f={H4A} data={h4aDown} color={SLATE} />
            <Candles f={H4B} data={h4bDown} color={SLATE} />
            <Candles f={H4C} data={h4cDown} color={SLATE} />
            <Candles f={H4A} data={h4aUp} color="#fff" />
            <Candles f={H4B} data={h4bUp} color="#fff" />
            <Candles f={H4C} data={h4cUp} color="#fff" />
            <rect x="1978" y="160" width="28.5" height="55" rx="1" fill="none" stroke="#f00" strokeWidth="3" />
            <HLines f={H4A} color="#fff" data="40 580 1404;580 1395 1145;1395 1842 752;342 415 1145;905 991 1323;242 270 1042;1287 1337 752" />
            <HLines f={H4B} color="#fff" data="274 1168 404;598 2097 319;1434 2025 356;1167 1435 523;137 195 404;520 570 320;887 959 523;1204 1355 356" />
            <HLines f={H4C} color="#fff" data="457 529 841;270 306 841;486 529 761;486 529 1057" />
            <Dots f={H4A} color="#1a2424" data="580 803;415 1207;1337 684;1395 932;1200 1459;38 1561" />
            <Dots f={H4B} color="#1a2424" data="865 82;1167 94;648 221;570 273;195 367;598 390;274 651;959 578;1067 779;1355 399;1434 215" />
            <Dots f={H4C} color="#1a2424" data="241 82;169 94;457 569;306 898" />
            <Dots f={H4A} color="#fff" data="40 1404;580 1145;1395 752" />
            <Dots f={H4B} color="#fff" data="274 405;598 319;1434 356;1167 523" />
            <Dots f={H4C} color="#fff" data="457 840" />
            <Arrows f={H4A} data="466 827;755 1001" />
            <Arrows f={H4B} data="433 77;621 222;1090 89;1421 261" />
            <Arrows f={H4C} data="394 583" />
            <Arrows f={H4A} up data="688 1275;897 1464" />
            <Arrows f={H4B} up data="576 383;879 694;1196 651" />
            <Arrows f={H4C} up data="262 930;507 1070" />
            <Marks f={H4A} data="450 758 1;1352 978 1" />
            <Marks f={H4B} data="202 695 1;605 177 2;591 436 1;1088 49 1;1406 171 1" />
            <Marks f={H4C} data="385 525 1" />
            <path d="M2842 3H2851L2846.5 8Z" fill="#808080" />
            <g fontFamily={ARIAL} fontSize="10.5" fill="#a9a9a9">
              <text x="2805" y="457" textLength="120">Prev / Daily High 0.89712</text>
              <text x="2804" y="631" textLength="121">Prev / Daily Low 0.88715</text>
            </g>
            <rect x="2855" y="612" width="24" height="2" fill="#00ff7f" />
            <text x="2878" y="624" fill="#00ff7f" fontFamily={ARIAL} fontSize="11" textLength="65">2% USD-1.96</text>
            <rect x="3377.5" y="892.5" width="7" height="19" rx="1" fill="#696969" stroke="#a9a9a9" />
          </Plot>

          <div className="absolute left-[3px] top-px flex h-[18px] items-center whitespace-nowrap text-white">
            <svg width="7" height="4" viewBox="0 0 7 4"><path d="M0 4H7L3.5 0Z" fill="#fff" /></svg>
            <span className="ml-[5px] w-[71px] font-['DejaVu_Sans',sans-serif] text-[9.5px] leading-none">USDCHF,H4</span>
            <div className="flex w-[149px] items-center gap-[5px]"><DailyChange /></div>
            <div className="flex h-[17px] gap-[2px] font-['Liberation_Sans',sans-serif] text-[13px] font-black leading-[17px] tracking-[0.75px]">
              <div className="flex w-[132px] justify-between bg-[#003f73] px-[10px]"><span>LONDON</span><span>14:50</span></div>
              <div className="flex w-[149px] justify-between bg-[#003f73] px-[10px]"><span>NEW YORK</span><span>09:50</span></div>
            </div>
          </div>
          <div className="absolute left-[3px] top-[17px]"><TradeTicket /></div>
          <div className="absolute left-[2px] top-[886px]"><ToolIcons /></div>

          <div className="absolute right-[10px] top-px flex flex-col items-end font-['Liberation_Sans',sans-serif] text-white">
            <div className="text-[26.8px] leading-[31px]">USDCHF H4</div>
            <div className="text-[26.8px] leading-[30px] text-[#00ffff]">0.88750</div>
            <div className="mt-[7px]">
              {infoRows.map(([k, v, kc, vc]) => (
                <div key={k} className="flex h-[15px] justify-end text-[12.7px] leading-[15px] tracking-[0.1px]">
                  <span className={kc}>{k}</span>
                  <span className={`w-12 text-right ${vc}`}>{v}</span>
                </div>
              ))}
            </div>
          </div>

          <div className="absolute right-[13px] top-[694px] flex flex-col items-end whitespace-nowrap font-['Liberation_Sans',sans-serif] text-[12px] font-bold text-[#787878]">
            <div className="mr-[4px] h-[22px] origin-right scale-x-[0.74] font-['Open_Sans',sans-serif] text-[18px] font-extrabold leading-[21px] text-white">USDCHF</div>
            <div className="-mr-[3px] mt-[5px] h-5 leading-[20px]">OpenPips</div>
            <div className="mt-[8px] h-5 origin-right scale-x-[0.88] font-['Roboto',sans-serif] text-[19px] font-normal leading-[20px]">0.00</div>
            <div className="mt-[8px] h-5 leading-[20px]">OpenPos</div>
            <div className="mt-[4px] h-5 origin-right scale-x-[0.84] font-['Roboto',sans-serif] text-[16px] font-light leading-[20px]">8.97%</div>
            <div className="mr-[3px] mt-[6px] h-5 leading-[20px]">Daily P/L</div>
            <div className="mt-[5px] h-5 origin-right scale-x-[0.88] font-['Roboto',sans-serif] text-[16px] font-normal leading-[20px] text-[#00ffff]">559.95%</div>
          </div>
        </div>
        <PriceAxis prices={h4Prices} pad="pt-[15px]" mark="0.88750" markTop="top-[607px]" />
      </div>

      <div className="mt-px flex h-[194px]">
        <div className="relative w-[2567px] border border-white">
          <Plot x={822} y={930} w={2565} h={192}>
            {trendDown.map(([f, d], i) => <Line key={i} f={f} d={d} color={SLATE} w={2.8} />)}
            {trendUp.map(([f, d], i) => <Line key={i} f={f} d={d} color="#fff" w={2.4} />)}
            {fastLine.map(([f, d], i) => <Line key={i} f={f} d={d} color="#808080" w={0.9} />)}
            {signalLine.map(([f, d], i) => <Line key={i} f={f} d={d} color="#ffd700" dash="3 3" />)}
            {spikesUp.map(([f, s]) => rows(s).map(([x, y]) => <rect key={f.ox + x} x={Math.round(fx(f, x) - 2)} y={fy(f, y)} width={4} height={1122 - fy(f, y)} fill="#f5f5f5" />))}
            {spikesDown.map(([f, s]) => rows(s).map(([x, y]) => <rect key={x} x={Math.round(fx(f, x) - 2)} y={fy(f, y)} width={4} height={1122 - fy(f, y)} fill={SLATE} />))}
          </Plot>
          <div className="absolute right-px top-px flex h-[18px] w-[193px] items-center justify-center whitespace-nowrap bg-[#696969] font-['Open_Sans',sans-serif] text-[13.9px] font-medium leading-none text-[#00ced1]">
            VZU TRADING SYSTEM V12.0
          </div>
        </div>
        <ZeroAxis />
      </div>
      <div className="mt-px flex h-[29px]">
        <div className="w-[2567px] border border-white">
          <Plot x={822} y={1125} w={2565} h={27}>
            {stripRows.map((r) => <Strip key={r.y} y={r.y} ranges={r.ranges} />)}
          </Plot>
        </div>
        <ZeroAxis />
      </div>
      <div className="mt-px flex h-[44px]">
        <div className="w-[2567px] border border-white">
          <Plot x={822} y={1155} w={2565} h={42}>
            <Histogram points={h4Envelope} zero={1176} />
            <rect x="3383" y="1161" width="4" height="18" fill="#4169e1" />
            <path d="M3385 1166h2M3385.5 1170h1.5M3385 1174h2" stroke="#fff" />
          </Plot>
        </div>
        <ZeroAxis />
      </div>
      <div className="mt-px flex h-[33px]">
        <div className="flex w-[2567px] justify-end border border-white pr-[15px] pt-[3px]"><Chips symbols={h4Symbols} h="h-4" /></div>
        <ZeroAxis />
      </div>
      <DateAxis dates={h4Dates} className="pl-px" />

      <div className="pointer-events-none absolute left-[2203px] top-[1188px] whitespace-nowrap font-['Open_Sans',sans-serif] text-[#8c8c8c]/80">
        <div className="text-[18px] leading-[22px] tracking-[0.1px]">Activate Windows</div>
        <div className="mt-[2px] text-[13.5px] leading-[20px]">Go to PC settings to activate Windows.</div>
      </div>
    </section>
  );
}

function TabBar() {
  return (
    <footer className="h-[29px] border-t-[3px] border-[#e4e4e4] bg-[#f0f0f0] font-['Open_Sans',sans-serif] text-[11.5px] text-[#6d6d6d]">
      <div className="flex h-[21px] border-y border-b-white border-t-black">
        <div className="w-[112px] pl-[14px] leading-[18px] tracking-[-0.1px]">USDCHF,Weekly</div>
        <div className="mt-[3px] h-[13px] w-px bg-[#6d6d6d]" />
        <div className="w-[95px] pl-[10px] leading-[18px] tracking-[-0.1px]">USDCHF,Daily</div>
        <div className="-mt-px h-[19px] w-[83px] border border-t-0 border-black bg-white text-center leading-[19px] text-black">USDCHF,H4</div>
        <div className="ml-auto flex items-center gap-[14px] pr-[4px]">
          <svg width="4" height="8" viewBox="0 0 4 8"><path d="M4 0V8L0 4Z" fill="#8a8a8a" /></svg>
          <svg width="4" height="8" viewBox="0 0 4 8"><path d="M0 0V8L4 4Z" fill="#8a8a8a" /></svg>
        </div>
      </div>
      <div className="flex h-[5px] items-end justify-end gap-[70px] pr-[124px]">
        {[0, 1, 2, 3, 4, 5, 6, 7, 8].map((i) => <span key={i} className="h-[2px] w-px bg-[#a0a0a0]" />)}
      </div>
    </footer>
  );
}

export default function App() {
  return (
    <div className="flex h-[1281px] w-[3431px] flex-col overflow-hidden bg-black">
      <div className="flex h-[1252px]">
        <div className="flex w-[819px] flex-col">
          <div className="border-r-2 border-[#8f8f8f]">
            <WeeklyWindow />
            <div className="h-[3px] border-t border-[#777] bg-white" />
            <DailyWindow />
          </div>
        </div>
        <H4Window />
      </div>
      <TabBar />
    </div>
  );
}
